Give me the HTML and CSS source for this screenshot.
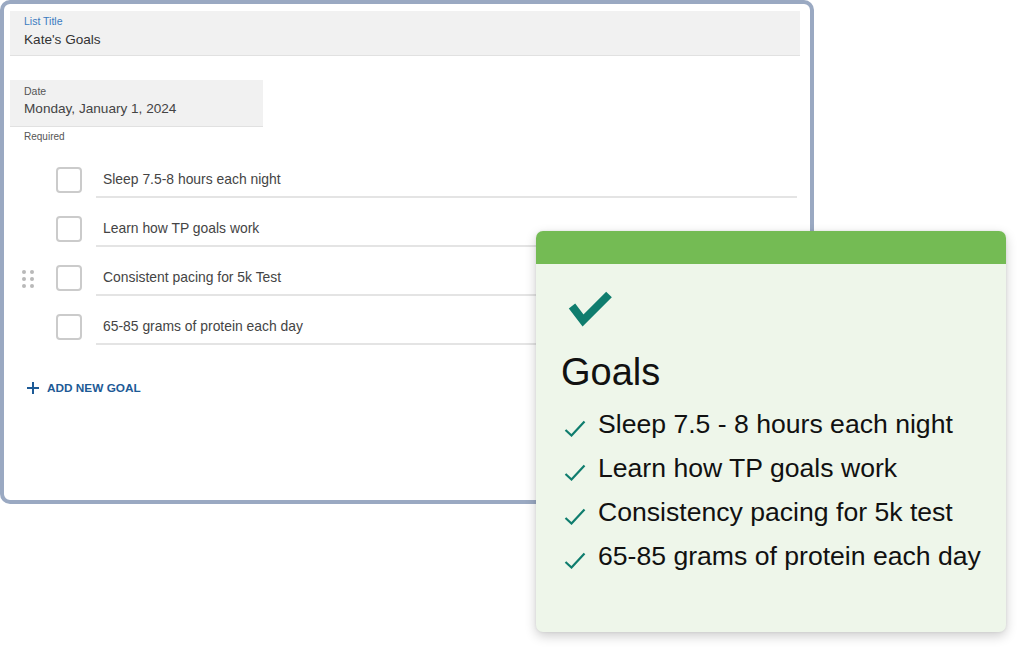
FILE: index.html
```html
<!DOCTYPE html>
<html>
<head>
<meta charset="utf-8">
<link rel="stylesheet" href="styles.css">
</head>
<body>
<div class="page">
  <div class="frame">
    <div class="field title-field">
      <div class="field-label blue">List Title</div>
      <div class="field-value">Kate's Goals</div>
    </div>
    <div class="field date-field">
      <div class="field-label">Date</div>
      <div class="field-value">Monday, January 1, 2024</div>
    </div>
    <div class="hint">Required</div>
    <div class="rows">
      <div class="row">
        <div class="handle"></div>
        <div class="checkbox"></div>
        <div class="row-text">Sleep 7.5-8 hours each night</div>
      </div>
      <div class="row">
        <div class="handle"></div>
        <div class="checkbox"></div>
        <div class="row-text">Learn how TP goals work</div>
      </div>
      <div class="row">
        <div class="handle visible"><span></span><span></span><span></span><span></span><span></span><span></span></div>
        <div class="checkbox"></div>
        <div class="row-text">Consistent pacing for 5k Test</div>
      </div>
      <div class="row">
        <div class="handle"></div>
        <div class="checkbox"></div>
        <div class="row-text">65-85 grams of protein each day</div>
      </div>
    </div>
    <div class="add-goal">
      <svg class="plus" width="12" height="12" viewBox="0 0 12 12"><path d="M6 0V12M0 6H12" stroke="#1d5a96" stroke-width="2"/></svg>
      <span>ADD NEW GOAL</span>
    </div>
  </div>

  <div class="card">
    <div class="card-head"></div>
    <div class="card-body">
      <svg class="big-check" width="48" height="40" viewBox="0 0 48 40"><polyline points="6,16 17,30.5 43,4.5" fill="none" stroke="#0f7d6e" stroke-width="8" stroke-linecap="butt" stroke-linejoin="miter"/></svg>
      <div class="card-title">Goals</div>
      <ul class="goal-list">
        <li><svg class="tick" width="22" height="17" viewBox="0 0 22 17"><polyline points="1.5,10 7.5,15.5 20.5,1.5" fill="none" stroke="#0f7d6e" stroke-width="2.2"/></svg><span>Sleep 7.5 - 8 hours each night</span></li>
        <li><svg class="tick" width="22" height="17" viewBox="0 0 22 17"><polyline points="1.5,10 7.5,15.5 20.5,1.5" fill="none" stroke="#0f7d6e" stroke-width="2.2"/></svg><span>Learn how TP goals work</span></li>
        <li><svg class="tick" width="22" height="17" viewBox="0 0 22 17"><polyline points="1.5,10 7.5,15.5 20.5,1.5" fill="none" stroke="#0f7d6e" stroke-width="2.2"/></svg><span>Consistency pacing for 5k test</span></li>
        <li><svg class="tick" width="22" height="17" viewBox="0 0 22 17"><polyline points="1.5,10 7.5,15.5 20.5,1.5" fill="none" stroke="#0f7d6e" stroke-width="2.2"/></svg><span>65-85 grams of protein each day</span></li>
      </ul>
    </div>
  </div>
</div>
</body>
</html>
```

FILE: styles.css
```css
* { box-sizing: border-box; }
html, body { margin: 0; padding: 0; background: #ffffff; }
body { font-family: "Liberation Sans", Arial, sans-serif; width: 1024px; height: 660px; overflow: hidden; }

.page { position: relative; width: 1024px; height: 660px; }

.frame {
  width: 814px;
  height: 504px;
  border: 4px solid #9aa9c2;
  border-radius: 10px;
  padding: 7px 10px 0 6px;
  background: #ffffff;
}

.field {
  background: #f1f1f1;
  border-bottom: 1px solid #e1e1e1;
  padding: 3px 14px 0;
}
.title-field { height: 45px; }
.date-field { margin-top: 24px; width: 253px; height: 47px; padding-top: 4px; }

.field-label { font-size: 10.5px; line-height: 14px; color: #555; }
.field-label.blue { color: #3b7cc0; }
.field-value { font-size: 13.6px; line-height: 18px; color: #333; margin-top: 3px; }
.date-field .field-value { margin-top: 2px; color: #444; }

.hint { font-size: 10px; line-height: 14px; color: #555; margin-top: 3px; padding-left: 14px; }

.rows { margin-top: 5px; margin-right: 3px; padding-left: 12px; }
.row { display: flex; height: 49px; }
.handle {
  width: 12px;
  height: 18px;
  align-self: flex-end;
  margin-bottom: 8px;
  display: grid;
  grid-template-columns: 4px 4px;
  column-gap: 4px;
  row-gap: 3px;
}
.handle span { width: 4px; height: 4px; border-radius: 50%; background: #b9b9b9; }
.checkbox {
  width: 26px;
  height: 26px;
  margin-left: 22px;
  align-self: flex-end;
  margin-bottom: 5px;
  border: 2px solid #cbcbcb;
  border-radius: 4px;
  background: #fff;
}
.row-text {
  flex: 1;
  margin-left: 14px;
  padding: 12px 0 0 7px;
  display: flex;
  align-items: center;
  border-bottom: 2px solid #e4e4e4;
  font-size: 13.9px;
  color: #444;
}

.add-goal {
  margin-top: 35px;
  padding-left: 17px;
  display: flex;
  align-items: center;
  gap: 8px;
  height: 16px;
  color: #1d5a96;
  font-weight: bold;
  font-size: 11.8px;
}
.plus { display: block; }

.card {
  position: absolute;
  left: 536px;
  top: 231px;
  width: 470px;
  height: 401px;
  background: #eef6ea;
  border-radius: 7px;
  overflow: hidden;
  box-shadow: 0 4px 12px rgba(0, 0, 0, 0.2), 0 0 3px rgba(0, 0, 0, 0.08);
}
.card-head { height: 33px; background: #74bb54; }
.card-body { padding: 26px 0 0 25px; }
.big-check { display: block; margin-left: 5px; }
.card-title {
  margin-top: 20px;
  font-size: 38px;
  line-height: 44px;
  color: #111;
}
.goal-list { list-style: none; margin: 8px 0 0; padding: 0 0 0 3px; }
.goal-list li {
  display: flex;
  align-items: center;
  height: 44px;
  font-size: 26.6px;
  color: #111;
}
.tick { display: block; margin-top: 9px; margin-right: 12px; flex: none; }
```
